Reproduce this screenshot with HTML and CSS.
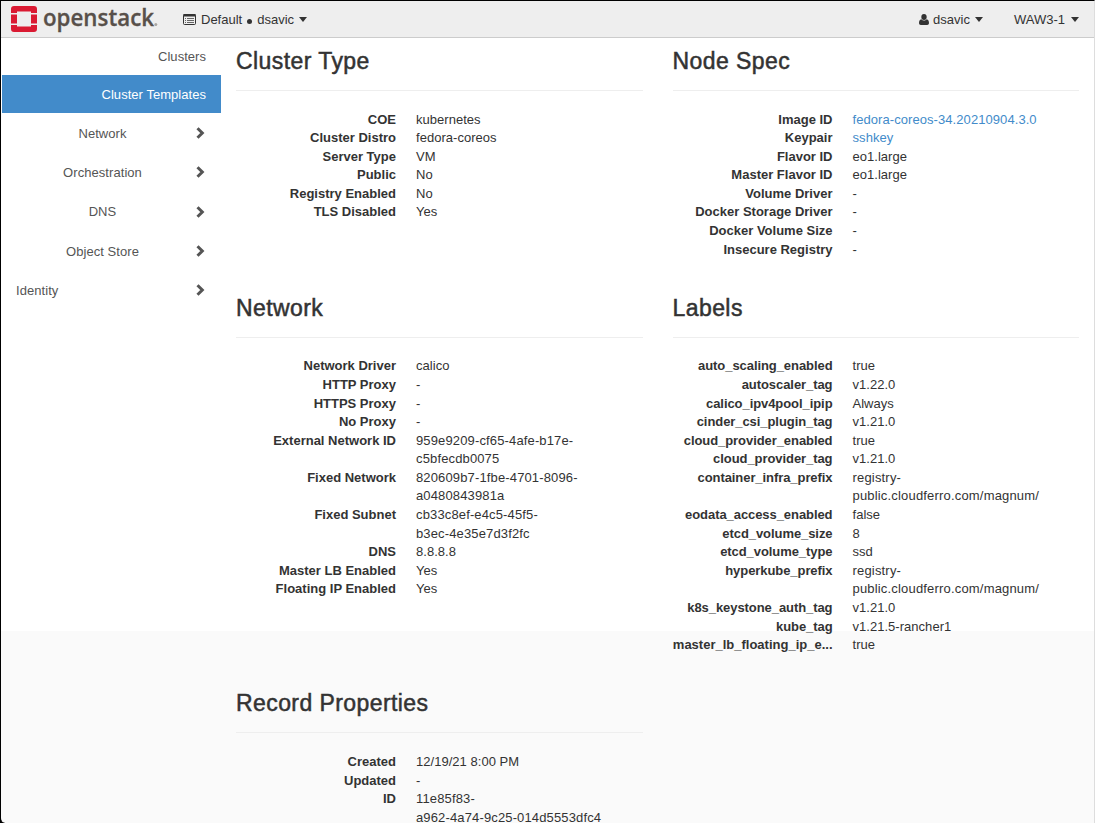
FILE: index.html
```html
<!DOCTYPE html>
<html lang="en">
<head>
<meta charset="utf-8">
<title>Cluster Templates - OpenStack Dashboard</title>
<link rel="stylesheet" href="styles.css">
</head>
<body>
<div class="window">
  <header class="navbar">
    <a class="brand">
      <svg width="150" height="32" viewBox="0 0 150 32">
        <g fill="#da1a32">
          <path d="M3 5h20a3 3 0 0 1 3 3v4h-6v-1.500h-14v1.500h-6v-4a3 3 0 0 1 3-3z"/>
          <path d="M0 13.500h6v9h-6zM20 13.500h6v9h-6z"/>
          <path d="M0 24h6v1.500h14v-1.500h6v4a3 3 0 0 1-3 3h-20a3 3 0 0 1-3-3z"/>
        </g>
        <text class="wordmark" x="32" y="25" textLength="111" lengthAdjust="spacingAndGlyphs">openstack</text>
        <circle cx="144.800" cy="23.600" r="1.500" fill="#a9a5a1"/>
      </svg>
    </a>
    <a class="nav-item context">
      <svg class="list-icon" width="13" height="11" viewBox="0 0 13 11">
        <rect x=".5" y=".5" width="12" height="10" rx="1" fill="none" stroke="#333"/>
        <path d="M.5 0h12v2.500h-12z" fill="#333"/>
        <path d="M2 4.500h1M4 4.500h7M2 6.500h1M4 6.500h7M2 8.500h1M4 8.500h7" stroke="#666"/>
      </svg>
      <span>Default</span><span class="dot"></span><span>dsavic</span><span class="caret"></span>
    </a>
    <a class="nav-item user">
      <svg width="10" height="11" viewBox="0 0 10 11" fill="#333"><ellipse cx="5" cy="3" rx="2.700" ry="3"/><path d="M2.300 5.200C.7 5.500 0 7 0 9c0 1.300.8 2 1.800 2h6.400c1 0 1.800-.7 1.800-2 0-2-.7-3.500-2.300-3.800C6.200 7 3.800 7 2.300 5.200z"/></svg>
      <span>dsavic</span><span class="caret"></span>
    </a>
    <a class="nav-item region"><span>WAW3-1</span><span class="caret"></span></a>
  </header>
  <div class="body">
    <nav class="sidebar">
      <a class="leaf">Clusters</a>
      <a class="leaf active">Cluster Templates</a>
      <a class="group"><span>Network</span><svg class="chev" viewBox="0 0 9 12"><path d="M1.500 1.300 6.300 6l-4.800 4.700"/></svg></a>
      <a class="group"><span>Orchestration</span><svg class="chev" viewBox="0 0 9 12"><path d="M1.500 1.300 6.300 6l-4.800 4.700"/></svg></a>
      <a class="group"><span>DNS</span><svg class="chev" viewBox="0 0 9 12"><path d="M1.500 1.300 6.300 6l-4.800 4.700"/></svg></a>
      <a class="group"><span>Object Store</span><svg class="chev" viewBox="0 0 9 12"><path d="M1.500 1.300 6.300 6l-4.800 4.700"/></svg></a>
      <a class="group top"><span>Identity</span><svg class="chev" viewBox="0 0 9 12"><path d="M1.500 1.300 6.300 6l-4.800 4.700"/></svg></a>
    </nav>
    <main class="details">
      <section>
        <h3>Cluster Type</h3><hr>
        <dl>
          <dt>COE</dt><dd>kubernetes</dd>
          <dt>Cluster Distro</dt><dd>fedora-coreos</dd>
          <dt>Server Type</dt><dd>VM</dd>
          <dt>Public</dt><dd>No</dd>
          <dt>Registry Enabled</dt><dd>No</dd>
          <dt>TLS Disabled</dt><dd>Yes</dd>
        </dl>
      </section>
      <section>
        <h3>Node Spec</h3><hr>
        <dl>
          <dt>Image ID</dt><dd><a class="link">fedora-coreos-34.20210904.3.0</a></dd>
          <dt>Keypair</dt><dd><a class="link">sshkey</a></dd>
          <dt>Flavor ID</dt><dd>eo1.large</dd>
          <dt>Master Flavor ID</dt><dd>eo1.large</dd>
          <dt>Volume Driver</dt><dd>-</dd>
          <dt>Docker Storage Driver</dt><dd>-</dd>
          <dt>Docker Volume Size</dt><dd>-</dd>
          <dt>Insecure Registry</dt><dd>-</dd>
        </dl>
      </section>
      <section>
        <h3>Network</h3><hr>
        <dl>
          <dt>Network Driver</dt><dd>calico</dd>
          <dt>HTTP Proxy</dt><dd>-</dd>
          <dt>HTTPS Proxy</dt><dd>-</dd>
          <dt>No Proxy</dt><dd>-</dd>
          <dt>External Network ID</dt><dd class="uuid">959e9209-cf65-4afe-b17e-<br>c5bfecdb0075</dd>
          <dt>Fixed Network</dt><dd class="uuid">820609b7-1fbe-4701-8096-<br>a0480843981a</dd>
          <dt>Fixed Subnet</dt><dd class="uuid">cb33c8ef-e4c5-45f5-<br>b3ec-4e35e7d3f2fc</dd>
          <dt>DNS</dt><dd>8.8.8.8</dd>
          <dt>Master LB Enabled</dt><dd>Yes</dd>
          <dt>Floating IP Enabled</dt><dd>Yes</dd>
        </dl>
      </section>
      <section>
        <h3>Labels</h3><hr>
        <dl class="labels">
          <dt>auto_scaling_enabled</dt><dd>true</dd>
          <dt>autoscaler_tag</dt><dd>v1.22.0</dd>
          <dt>calico_ipv4pool_ipip</dt><dd>Always</dd>
          <dt>cinder_csi_plugin_tag</dt><dd>v1.21.0</dd>
          <dt>cloud_provider_enabled</dt><dd>true</dd>
          <dt>cloud_provider_tag</dt><dd>v1.21.0</dd>
          <dt>container_infra_prefix</dt><dd class="url">registry-<br>public.cloudferro.com/magnum/</dd>
          <dt>eodata_access_enabled</dt><dd>false</dd>
          <dt>etcd_volume_size</dt><dd>8</dd>
          <dt>etcd_volume_type</dt><dd>ssd</dd>
          <dt>hyperkube_prefix</dt><dd class="url">registry-<br>public.cloudferro.com/magnum/</dd>
          <dt>k8s_keystone_auth_tag</dt><dd>v1.21.0</dd>
          <dt>kube_tag</dt><dd>v1.21.5-rancher1</dd>
          <dt class="clipped">master_lb_floating_ip_e...</dt><dd>true</dd>
        </dl>
      </section>
      <section>
        <h3>Record Properties</h3><hr>
        <dl>
          <dt>Created</dt><dd>12/19/21 8:00 PM</dd>
          <dt>Updated</dt><dd>-</dd>
          <dt>ID</dt><dd class="uuid">11e85f83-<br>a962-4a74-9c25-014d5553dfc4</dd>
        </dl>
      </section>
    </main>
  </div>
</div>
</body>
</html>
```
FILE: styles.css
```css
* { box-sizing: border-box; }
body {
  margin: 0;
  height: 823px;
  overflow: hidden;
  background: #000;
  color: #333;
  font: 13px/18.571px "Liberation Sans", Arial, sans-serif;
}
.window {
  height: 823px;
  border-top: 1px solid #000;
  border-left: 1px solid #000;
  border-right: 1px solid #ddd;
  border-bottom-left-radius: 5px;
  overflow: hidden;
  background: linear-gradient(#fff 630px, #fafafa 630px);
}
.navbar {
  display: flex;
  align-items: center;
  height: 37px;
  padding: 0 15px 0 10px;
  background: #eee;
  border-bottom: 1px solid #ccc;
}
.brand { width: 172px; height: 32px; margin-top: -4px; }
.brand svg { display: block; }
.wordmark {
  font: 600 24px "Open Sans", sans-serif;
  fill: #58504a;
  stroke: #58504a;
  stroke-width: .3px;
}
.nav-item { display: flex; align-items: center; height: 36px; padding-top: 2px; }
.nav-item svg { margin-top: -1px; }
.list-icon { margin-right: 5px; }
.dot { width: 5px; height: 5px; margin: 3px 5px 0 5px; border-radius: 50%; background: #333; }
.caret {
  margin: -1px 0 0 5px;
  border: 4px solid transparent;
  border-top: 5px solid #333;
  border-bottom: 0;
}
.user { margin-left: auto; margin-right: 31px; }
.user svg { margin-right: 4px; }
.region .caret { margin-left: 6px; }
.body { display: flex; height: 785px; }
.sidebar { display: flex; flex-direction: column; width: 220px; padding-left: 1px; color: #555; }
.leaf { height: 37px; padding: 9.500px 15px 0 0; text-align: right; letter-spacing: .04px; }
.active { height: 38px; padding-top: 10.600px; background: #428bca; color: #fff; }
.group { display: flex; align-items: center; justify-content: space-between; height: 39.250px; padding: 1px 16px 0 14px; }
.group span { width: 173px; padding-top: 2px; text-align: center; letter-spacing: .06px; }
.group.top span { text-align: left; }
.chev { width: 9px; height: 12px; fill: none; stroke: #555; stroke-width: 3; }
.details {
  display: grid;
  grid-template-columns: 407px 406.500px;
  grid-auto-rows: max-content;
  column-gap: 29.500px;
  padding: 0 0 0 15px;
}
h3 {
  margin: 11px 0 16px;
  height: 25px;
  font-size: 23px;
  line-height: 25px;
  font-weight: 400;
  letter-spacing: .42px;
  -webkit-text-stroke: .5px #333;
}
hr { height: 1px; margin: 0 0 19.500px; border: 0; background: #eee; }
dl { display: grid; grid-template-columns: 160px 226px; column-gap: 20px; margin: 0 0 25.800px; }
dt { font-weight: 700; text-align: right; white-space: nowrap; }
dd { margin: 0; white-space: nowrap; letter-spacing: .03px; }
.uuid { letter-spacing: .14px; }
.url { letter-spacing: .18px; }
.labels dt { letter-spacing: -.07px; }
.labels .clipped { letter-spacing: 0; }
.link { color: #428bca; letter-spacing: .07px; }
```
